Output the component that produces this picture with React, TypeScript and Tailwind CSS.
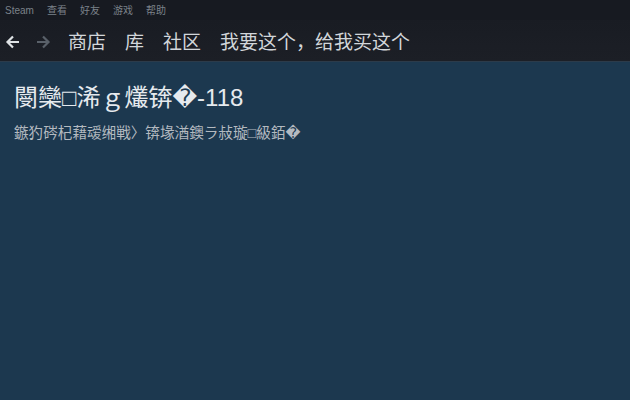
import React from "react";

const font = {
  fontFamily: '"Liberation Sans", "Noto Sans CJK SC", "DejaVu Sans", sans-serif',
};

const menuItems = ["Steam", "查看", "好友", "游戏", "帮助"];
const navItems = ["商店", "库", "社区", "我要这个，给我买这个"];

const Arrow = ({ dir, className }: { dir: "left" | "right"; className: string }) => (
  <svg width="16" height="16" viewBox="0 0 16 16" className={className}>
    {dir === "left" ? (
      <path d="M14 8H2.5M8 2.5L2.5 8L8 13.5" fill="none" stroke="currentColor" strokeWidth="2.2" />
    ) : (
      <path d="M2 8h11.5M8 2.5L13.5 8L8 13.5" fill="none" stroke="currentColor" strokeWidth="2.2" />
    )}
  </svg>
);

const App = () => {
  return (
    <div className="w-[630px] h-[400px] flex flex-col bg-[#1c384f]" style={font}>
      {/* menu bar */}
      <div className="h-[20px] flex items-center gap-[13px] pl-[5px] bg-[#171a21] text-[10px] text-[#7b828a]">
        {menuItems.map((m) => (
          <span key={m}>{m}</span>
        ))}
      </div>

      {/* nav bar */}
      <div className="h-[42px] pt-[3px] flex items-center bg-gradient-to-b from-[#191c23] to-[#1c1f26] border-b border-[#2c3b4a]">
        <Arrow dir="left" className="ml-[5px] text-[#dfe3e6]" />
        <Arrow dir="right" className="ml-[14px] text-[#596069]" />
        <div className="flex items-center gap-[19px] ml-[17px] text-[19px] text-[#d2d6da] leading-none">
          {navItems.map((n) => (
            <span key={n}>{n}</span>
          ))}
        </div>
      </div>

      {/* error body */}
      <div className="px-[14px] pt-[22px]">
        <h1 className="text-[24px] leading-[28px] text-[#e6eaee]">閿欒□浠ｇ爜锛�-118</h1>
        <p className="mt-[12px] text-[14.6px] leading-[18px] text-[#b4bac0]">
          鏃犳硶杞藉叆缃戦〉锛堟湭鐭ラ敊璇□級銆�
        </p>
      </div>
    </div>
  );
};

export default App;
